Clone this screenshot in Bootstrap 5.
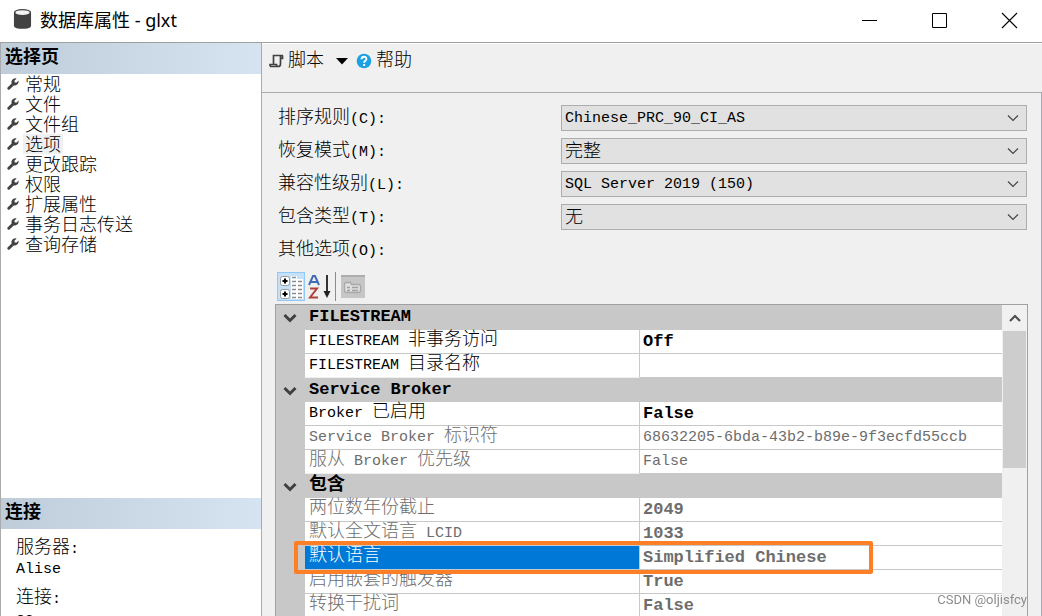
<!DOCTYPE html>
<html lang="zh-CN">
<head>
<meta charset="utf-8">
<meta name="viewport" content="width=device-width, initial-scale=1">
<title>数据库属性 - glxt</title>
<link href="https://cdn.jsdelivr.net/npm/bootstrap@5.3.0/dist/css/bootstrap.min.css" rel="stylesheet">
<style>
  :root { --face: #f0f0f0; --line: #a9abae; --cell: #c8c8c8; }
  body { font: 300 15px/20px "Liberation Mono", "Noto Sans CJK SC", monospace; color: #000; background: #fff; }
  .zh { font-size: 18px; line-height: 16px; }
  a { color: inherit; text-decoration: none; }
  button { border: 0; background: none; padding: 0; color: inherit; font-weight: 300; display: block; }
  svg { display: block; flex: none; overflow: visible; }

  .titlebar { height: 43px; border-bottom: 1px solid #a0a0a0; padding-left: 13px; }
  .titlebar h1 { font: 400 18px/40px "Noto Sans", "Noto Sans CJK SC", sans-serif; margin: 0; }
  .titlebar button { width: 70px; height: 39px; padding-left: 4px; }

  .side { width: 262px; border-left: 1px solid var(--line); border-right: 1px solid var(--line); display: grid; grid-template-rows: minmax(0, 1fr) 118px; }
  .side h2 { font-size: 18px; font-weight: 700; line-height: 31px; height: 31px; margin: 0; padding-left: 4px; background: linear-gradient(90deg, #bfcddb, #d6e4f2); }
  .side li { height: 20px; padding-left: 6px; }
  .side li a { font-size: 18px; height: 20px; line-height: 25px; padding: 0 2px; }
  .side li a.current { background: var(--face); }
  .conn dl { padding: 11px 15px 0; margin: 0; }
  .conn dt { font-weight: 300; line-height: 20px; }
  .conn dd { margin: 0 0 10px; line-height: 20px; }

  .work { background: var(--face); min-width: 0; border-top: 1px solid #fff; }
  .tools { height: 49px; padding: 7px 7px; border-bottom: 1px solid var(--line); }
  .tools button { height: 20px; line-height: 24px; }
  .pane { border-right: 1px solid var(--line); padding: 12px 13px 0; }
  .field { height: 26px; margin-bottom: 7px; padding: 0 1px 0 3px; }
  .field .caption { flex: 0 0 283px; padding-top: 4px; }
  .field .form-select { height: 26px; padding: 2px 28px 0 3px; border: 1px solid #adadad; border-radius: 0; color: #000; line-height: 22px; font-size: 15px; font-weight: 300;
    background-color: #e1e1e1; background-position: right 6px center; background-size: 14px 14px;
    background-image: url("data:image/svg+xml,%3csvg xmlns='http://www.w3.org/2000/svg' viewBox='0 0 14 14'%3e%3cpath fill='none' stroke='%23444' stroke-width='1.2' d='M2 4.5l5 5 5-5'/%3e%3c/svg%3e"); }
  .field .form-select.zh { font-size: 18px; }
  .gridtools { height: 34px; padding: 1px 2px 3px; }
  .gridtools .on { background: #c5e0f7; border: 1px solid #90c8f6; }
  .gridtools .rule { width: 1px; height: 29px; background: #8c8c8c; margin: 0 5px; }

  .propbox { border: 1px solid #a0a0a0; border-bottom: 0; background: var(--face); }
  .props { table-layout: fixed; border-collapse: separate; border-spacing: 0; background: #fff; }
  .props col.gut { width: 29px; }
  .props col.key { width: 335px; }
  .props tr > * { height: 24px; line-height: 20px; padding: 0 0 0 3px; white-space: nowrap; border-bottom: 1px solid var(--cell); font-weight: 300; vertical-align: middle; }
  .props tr:has(+ .group) > th, .props tr:has(+ .group) > td + * { border-bottom-color: #efefef; }
  .props tr > .gutter, .props .group > * { background: var(--cell); }
  .props tr:first-child > * { height: 25px; }
  .props .group td { padding: 2px 2px 0 0; }
  .props .group th { font-weight: 700; font-size: 17px; padding-left: 4px; }
  .props .group .zh { font-size: 18px; }
  .props tr > th[scope=row] { border-right: 1px solid var(--cell); padding-left: 4px; }
  .props .bold td:last-child { font-weight: 700; font-size: 17px; }
  .props .off > * { color: #6d6d6d; }
  .props tr.picked > th { background: #0078d7; color: #fff; position: relative; }
  .callout-box { position: absolute; left: -11px; top: -5px; width: 579px; height: 33px; border: 4px solid #ff7f27; border-radius: 2px; z-index: 2; }
  .scroller { width: 25px; padding-left: 1px; }
  .scroller button { height: 26px; }
  .scroller .thumb { height: 137px; background: #cdcdcd; margin-right: 1px; }
  .watermark { position: fixed; right: 15px; bottom: 7px; font: 400 13px/18px Roboto, sans-serif; color: #8d8d8d; z-index: 3; }
</style>
</head>
<body class="vh-100 d-flex flex-column overflow-hidden">
<svg class="d-none">
  <symbol id="wrench" viewBox="0 0 12 12"><path d="M1.8 10.3 6.2 6" stroke="#424242" stroke-width="2.9" stroke-linecap="round"/><path d="M9.6.5 7.4 2.7l.3 1.6 1.6.4 2.200-2.200c.5 2.100-.4 4.600-3.200 4.900-3.100.2-4.500-2.200-3.600-4.600C5.400.9 7.500-.1 9.600.5z" fill="#424242"/></symbol>
  <symbol id="chev" viewBox="0 0 14 10"><path d="M1.500 2 7 7.500 12.500 2" fill="none" stroke="#404040" stroke-width="3"/></symbol>
</svg>

<header class="titlebar d-flex align-items-start flex-shrink-0">
  <svg class="mt-2 me-2" width="19" height="22" viewBox="0 0 20 22"><path d="M1 4v14c0 4.500 18 4.500 18 0V4z" fill="#424242"/><ellipse cx="10" cy="4" rx="9" ry="3.600" fill="#424242"/><ellipse cx="10" cy="4.200" rx="7.500" ry="2.500" fill="#f4f4f4"/></svg>
  <h1 class="flex-grow-1">数据库属性 - glxt</h1>
  <button type="button" aria-label="最小化"><svg class="mx-auto" width="16" height="16"><path d="M1 8.500h15" stroke="#000"/></svg></button>
  <button type="button" aria-label="最大化"><svg class="mx-auto" width="16" height="16"><path d="M1.500 1.500h14v14h-14z" fill="none" stroke="#000"/></svg></button>
  <button type="button" aria-label="关闭"><svg class="mx-auto" width="16" height="16"><path d="M1 1l15 15M16 1 1 16" stroke="#000" stroke-width="1.100"/></svg></button>
</header>

<div class="d-flex flex-grow-1 overflow-hidden">
  <aside class="side flex-shrink-0">
    <nav aria-label="选择页">
      <h2>选择页</h2>
      <ul class="list-unstyled m-0">
        <li class="d-flex align-items-center"><svg class="me-1" width="12" height="12"><use href="#wrench"/></svg><a href="#">常规</a></li>
        <li class="d-flex align-items-center"><svg class="me-1" width="12" height="12"><use href="#wrench"/></svg><a href="#">文件</a></li>
        <li class="d-flex align-items-center"><svg class="me-1" width="12" height="12"><use href="#wrench"/></svg><a href="#">文件组</a></li>
        <li class="d-flex align-items-center"><svg class="me-1" width="12" height="12"><use href="#wrench"/></svg><a href="#" class="current" aria-current="page">选项</a></li>
        <li class="d-flex align-items-center"><svg class="me-1" width="12" height="12"><use href="#wrench"/></svg><a href="#">更改跟踪</a></li>
        <li class="d-flex align-items-center"><svg class="me-1" width="12" height="12"><use href="#wrench"/></svg><a href="#">权限</a></li>
        <li class="d-flex align-items-center"><svg class="me-1" width="12" height="12"><use href="#wrench"/></svg><a href="#">扩展属性</a></li>
        <li class="d-flex align-items-center"><svg class="me-1" width="12" height="12"><use href="#wrench"/></svg><a href="#">事务日志传送</a></li>
        <li class="d-flex align-items-center"><svg class="me-1" width="12" height="12"><use href="#wrench"/></svg><a href="#">查询存储</a></li>
      </ul>
    </nav>
    <section class="conn overflow-hidden">
      <h2>连接</h2>
      <dl>
        <dt><span class="zh">服务器</span>:</dt><dd>Alise</dd>
        <dt><span class="zh">连接</span>:</dt><dd>sa</dd>
      </dl>
    </section>
  </aside>

  <main class="work flex-grow-1 d-flex flex-column">
    <div class="tools d-flex align-items-start flex-shrink-0">
      <button type="button" class="d-flex align-items-center zh"><svg class="me-1" width="15" height="14" viewBox="0 0 15 14"><path d="M4.500 10V1.500H14M11.500 1.500v8.500q0 2.500-2.500 2.500H2.500Q1 12.500 1 10.500h6.500q0 2 1.500 2M13.500 1.500v3h-2" fill="none" stroke="#424242" stroke-width="1.700"/></svg>脚本<svg class="ms-2 me-1" width="20" height="7" viewBox="0 0 20 7"><path d="M4 0h12l-6 6.500z"/></svg></button>
      <button type="button" class="d-flex align-items-center zh"><svg class="me-1" width="16" height="16" viewBox="0 0 16 16"><circle cx="8" cy="8" r="7.300" fill="#1ba1e2"/><path d="M5.500 6.200C5.600 2.800 10.500 3 10.400 6c0 1.700-2.300 1.700-2.300 3.700" fill="none" stroke="#fff" stroke-width="1.900"/><path d="M7.100 11h2v2h-2z" fill="#fff"/></svg>帮助</button>
    </div>
    <div class="pane flex-grow-1 d-flex flex-column overflow-hidden">
      <div class="field d-flex align-items-center flex-shrink-0"><label class="caption" for="coll"><span class="zh">排序规则</span>(C):</label><select id="coll" class="form-select"><option>Chinese_PRC_90_CI_AS</option></select></div>
      <div class="field d-flex align-items-center flex-shrink-0"><label class="caption" for="rec"><span class="zh">恢复模式</span>(M):</label><select id="rec" class="form-select zh"><option>完整</option></select></div>
      <div class="field d-flex align-items-center flex-shrink-0"><label class="caption" for="compat"><span class="zh">兼容性级别</span>(L):</label><select id="compat" class="form-select"><option>SQL Server 2019 (150)</option></select></div>
      <div class="field d-flex align-items-center flex-shrink-0"><label class="caption" for="cont"><span class="zh">包含类型</span>(T):</label><select id="cont" class="form-select zh"><option>无</option></select></div>
      <div class="field d-flex align-items-center flex-shrink-0"><span class="caption"><span class="zh">其他选项</span>(O):</span></div>
      <div class="gridtools d-flex align-items-center flex-shrink-0">
        <button type="button" class="on" aria-label="按分类顺序"><svg width="26" height="27" viewBox="0 0 26 27"><g fill="#fff" stroke="#9a9a9a"><rect x="2.500" y="3.500" width="9" height="9" rx="2"/><rect x="2.500" y="16.500" width="9" height="9" rx="2"/></g><path d="M4.500 8h5M7 5.500v5M4.500 21h5M7 18.500v5" stroke="#000" stroke-width="2"/><path d="M13 3h6v3h6v20H13z" fill="#fff"/><path d="M14 4.500h4M14 8.500h4M14 12.500h4M14 16.500h4M14 20.500h4M14 24.500h4M20 8.500h4M20 12.500h4M20 16.500h4M20 20.500h4M20 24.500h4" stroke="#8c8c8c" stroke-width="1.300"/></svg></button>
        <button type="button" class="ms-1" aria-label="按字母顺序"><svg width="22" height="27" viewBox="0 0 22 27"><path d="M0 12 4 3h2l4 9M2 9h6" fill="none" stroke="#3f6db5" stroke-width="2"/><path d="M1 15.500h7L1 24.500h8" fill="none" stroke="#b0413a" stroke-width="2"/><path d="M18 2v20" stroke="#333" stroke-width="2"/><path d="M14.500 18h7L18 25z" fill="#222"/></svg></button>
        <div class="rule ms-1"></div>
        <button type="button" disabled aria-label="属性页"><svg width="24" height="23" viewBox="0 0 24 23"><path d="M0 0h24v23H0z" fill="#c6c6c6"/><path d="M0 1h24" stroke="#adadad" stroke-width="2"/><path d="M3.500 9.500q0-2 2-2h4l1 2h7q2 0 2 2v4q0 2-2 2h-12q-2 0-2-2z" fill="#dedede" stroke="#a8a8a8" stroke-width="1.300"/><path d="M6 12.500h3M11 12.500h6M6 15.500h3M11 15.500h6" stroke="#a0a0a0" stroke-width="1.300"/></svg></button>
      </div>
      <div class="propbox d-flex flex-grow-1 overflow-hidden">
        <div class="flex-grow-1 overflow-hidden">
        <table class="props w-100">
          <colgroup><col class="gut"><col class="key"><col></colgroup>
          <tbody>
            <tr class="group"><td><svg class="mx-auto" width="14" height="10"><use href="#chev"/></svg></td><th colspan="2">FILESTREAM</th></tr>
            <tr class="bold"><td class="gutter"></td><th scope="row">FILESTREAM <span class="zh">非事务访问</span></th><td>Off</td></tr>
            <tr><td class="gutter"></td><th scope="row">FILESTREAM <span class="zh">目录名称</span></th><td></td></tr>
            <tr class="group"><td><svg class="mx-auto" width="14" height="10"><use href="#chev"/></svg></td><th colspan="2">Service Broker</th></tr>
            <tr class="bold"><td class="gutter"></td><th scope="row">Broker <span class="zh">已启用</span></th><td>False</td></tr>
            <tr class="off"><td class="gutter"></td><th scope="row">Service Broker <span class="zh">标识符</span></th><td>68632205-6bda-43b2-b89e-9f3ecfd55ccb</td></tr>
            <tr class="off"><td class="gutter"></td><th scope="row"><span class="zh">服从</span> Broker <span class="zh">优先级</span></th><td>False</td></tr>
            <tr class="group"><td><svg class="mx-auto" width="14" height="10"><use href="#chev"/></svg></td><th colspan="2"><span class="zh">包含</span></th></tr>
            <tr class="off bold"><td class="gutter"></td><th scope="row"><span class="zh">两位数年份截止</span></th><td>2049</td></tr>
            <tr class="off bold"><td class="gutter"></td><th scope="row"><span class="zh">默认全文语言</span> LCID</th><td>1033</td></tr>
            <tr class="off bold picked"><td class="gutter"></td><th scope="row"><span class="zh">默认语言</span><span class="callout-box"></span></th><td>Simplified Chinese</td></tr>
            <tr class="off bold"><td class="gutter"></td><th scope="row"><span class="zh">启用嵌套的触发器</span></th><td>True</td></tr>
            <tr class="off bold"><td class="gutter"></td><th scope="row"><span class="zh">转换干扰词</span></th><td>False</td></tr>
          </tbody>
        </table>
        </div>
        <div class="scroller flex-shrink-0">
          <button type="button" class="w-100" aria-label="向上滚动"><svg class="mx-auto" width="12" height="10"><path d="M1 8l5-5 5 5" fill="none" stroke="#505050" stroke-width="2.200"/></svg></button>
          <div class="thumb"></div>
        </div>
      </div>
    </div>
  </main>
</div>
<div class="watermark">CSDN @oljisfcy</div>
<script src="https://cdn.jsdelivr.net/npm/bootstrap@5.3.0/dist/js/bootstrap.bundle.min.js"></script>
</body>
</html>
